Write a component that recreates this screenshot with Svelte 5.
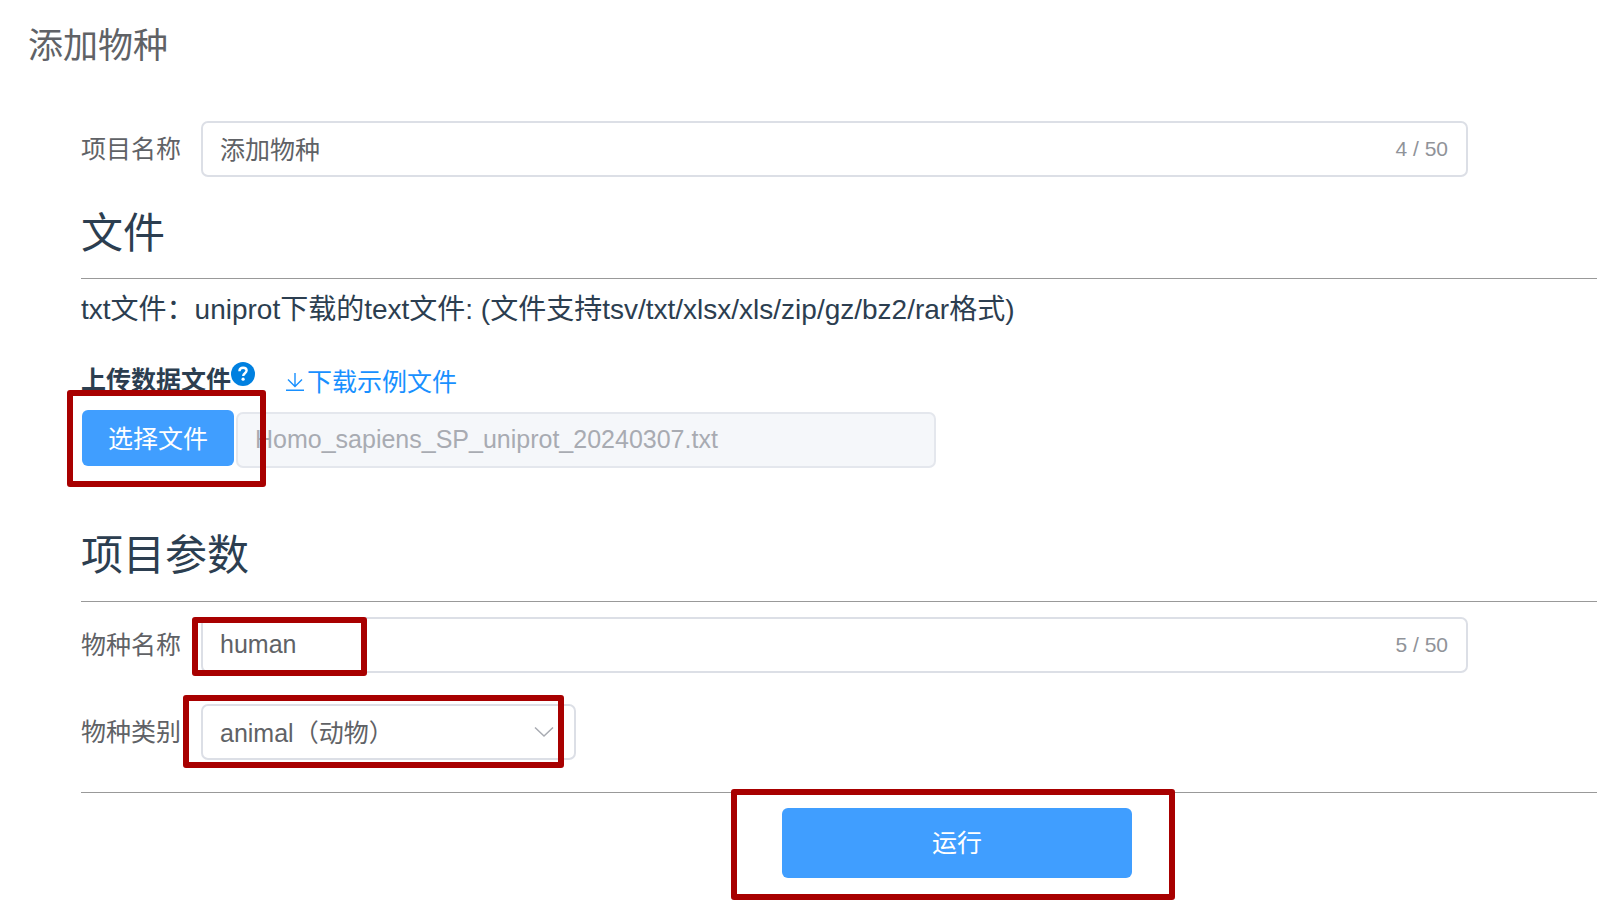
<script>
  let projectName = $state("添加物种");
  let speciesName = $state("human");
  let category = $state("animal");
  let fileName = $state("Homo_sapiens_SP_uniprot_20240307.txt");

  const maxLength = 50;
  const categories = [
    { value: "animal", label: "animal（动物）" },
    { value: "plant", label: "plant（植物）" },
  ];
</script>

<main lang="zh-CN">
  <h1>添加物种</h1>

  <form onsubmit={(e) => e.preventDefault()}>
    <div class="row">
      <label for="project">项目名称</label>
      <div class="field">
        <input id="project" type="text" maxlength={maxLength} bind:value={projectName} />
        <span class="count">{projectName.length} / {maxLength}</span>
      </div>
    </div>

    <h2>文件</h2>
    <hr />
    <p class="desc">txt文件：uniprot下载的text文件: (文件支持tsv/txt/xlsx/xls/zip/gz/bz2/rar格式)</p>

    <div class="upload-head">
      <label class="bold" for="file">上传数据文件</label>
      <svg class="help" viewBox="0 0 24 24" aria-hidden="true">
        <circle cx="12" cy="12" r="12" fill="#0080e0" />
        <path d="M8.4 9.2C8.5 6.9 10 5.7 12.1 5.7c2.1 0 3.5 1.1 3.5 2.9 0 2.6-3.4 2.6-3.4 5.3" fill="none" stroke="#fff" stroke-width="2.4" />
        <circle cx="12.1" cy="17.2" r="1.6" fill="#fff" />
      </svg>
      <a href="#example">
        <svg class="download" viewBox="0 0 20 20" aria-hidden="true">
          <path d="M10 1v13M3 7.5l7 7 7-7M1 18.2h18" fill="none" stroke="currentColor" stroke-width="1.4" />
        </svg>下载示例文件</a>
    </div>

    <div class="upload">
      <div class="marked mark-file">
        <button type="button" class="primary">选择文件</button>
      </div>
      <input id="file" type="text" disabled value={fileName} />
    </div>

    <h2>项目参数</h2>
    <hr />

    <div class="row species">
      <label for="species">物种名称</label>
      <div class="field marked mark-name">
        <input id="species" type="text" maxlength={maxLength} bind:value={speciesName} />
        <span class="count">{speciesName.length} / {maxLength}</span>
      </div>
    </div>

    <div class="row category">
      <label for="category">物种类别</label>
      <div class="select marked mark-category">
        <select id="category" bind:value={category}>
          {#each categories as c}
            <option value={c.value}>{c.label}</option>
          {/each}
        </select>
        <svg class="chevron" viewBox="0 0 20 12" aria-hidden="true">
          <path d="M1 1.5l9 8.5 9-8.5" fill="none" stroke="#a8abb2" stroke-width="1.5" />
        </svg>
      </div>
    </div>
    <hr />

    <div class="actions">
      <div class="marked mark-run">
        <button type="submit" class="primary run">运行</button>
      </div>
    </div>
  </form>
</main>

<style>
  :global(body) { margin:0; background:#fff; }
  main { padding:23px 0 32px; color:#2c3e50; }
  main, input, select, button { font-family:"Liberation Sans", "Noto Sans CJK SC", sans-serif; }
  h1 { margin:0 0 52px 28px; font-size:35px; line-height:46px; font-weight:400; color:#606266; }
  form { padding-left:81px; font-size:25px; }
  h2 { margin:0; font-size:42px; line-height:56px; font-weight:400; }
  hr { margin:0; border:0; border-top:1px solid #999; }

  .row { display:flex; align-items:center; gap:20px; padding-right:129px; color:#606266; }
  .row label { flex:none; width:100px; line-height:56px; white-space:nowrap; }
  .field { position:relative; flex:1; display:flex; align-items:center; }
  input, select { box-sizing:border-box; width:100%; height:56px; padding:0 17px 2px; border:2px solid #dcdfe6; border-radius:7px; background:#fff; color:#606266; font-size:25px; outline:none; }
  .count { position:absolute; right:20px; font-size:21px; color:#909399; }

  .row + h2 { margin:29px 0 16px; }
  .desc { margin:11px 0 32px; font-size:28px; line-height:40px; }
  .upload-head { display:flex; align-items:center; height:36px; line-height:36px; }
  .bold { font-weight:700; }
  .help { width:24px; height:24px; margin-bottom:12px; }
  a { display:flex; align-items:center; margin:4px 0 0 30px; gap:2px; color:#1890ff; text-decoration:none; }
  .download { width:20px; height:20px; }

  .upload { display:flex; gap:2px; margin:12px 0 60px 1px; }
  .upload input { max-width:700px; margin-top:2px; background:#f5f7fa; border-color:#e4e7ed; color:#a8abb2; }
  .upload + h2 { margin-bottom:17px; }
  .primary { display:block; height:56px; padding:0 26px 3px; border:0; border-radius:6px; background:#409eff; color:#fff; font-size:25px; white-space:nowrap; cursor:pointer; }

  .species { margin-top:15px; }
  .category { margin:31px 0 32px; }
  .select { position:relative; width:375px; }
  select { display:block; padding-top:3px; appearance:none; }
  .chevron { position:absolute; right:22px; top:22px; width:20px; height:12px; pointer-events:none; }

  .actions { display:flex; justify-content:center; padding:15px 0 0 236px; }
  .run { width:350px; height:70px; padding-bottom:5px; }

  /* red frames around the steps to follow */
  .marked { position:relative; }
  .marked::after { content:""; position:absolute; z-index:1; border:6px solid #a80000; border-radius:3px; pointer-events:none; }
  .mark-file::after { inset:-20px -32px -19px -15px; }
  .mark-name::after { left:-9px; top:0; bottom:-3px; width:163px; }
  .mark-category::after { inset:-9px 12px -8px -18px; }
  .mark-run::after { inset:-19px -43px -22px -51px; }
</style>
